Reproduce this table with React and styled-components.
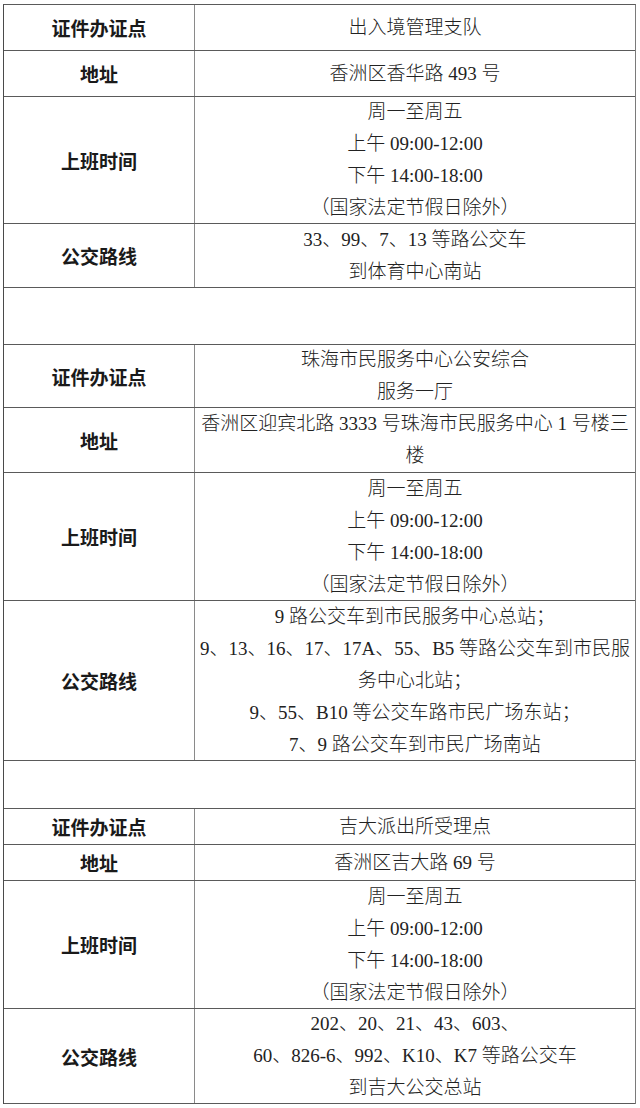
import React from "react";
import styled, { createGlobalStyle } from "styled-components";

const GlobalStyle = createGlobalStyle`
  html, body {
    margin: 0;
    padding: 0;
    background: #ffffff;
  }
`;

const Page = styled.div`
  padding: 4px 0 0 3px;
`;

const Table = styled.div`
  width: 633px;
  border-top: 1px solid #5a5a5a;
  border-left: 1px solid #4a4a4a;
  border-right: 1px solid #7a7a7a;
  box-sizing: border-box;
`;

const Row = styled.div`
  display: flex;
  height: ${(p) => p.$h}px;
  border-bottom: 1px solid #5a5a5a;
  box-sizing: border-box;
`;

const LabelCell = styled.div`
  width: 191px;
  flex-shrink: 0;
  display: flex;
  align-items: center;
  justify-content: center;
  border-right: 1px solid #8a8a8a;
  box-sizing: border-box;
  font-family: "Noto Sans CJK SC", "Noto Sans", sans-serif;
  font-weight: 700;
  font-size: 19px;
  color: #1a1a1a;
`;

const ValueCell = styled.div`
  flex: 1;
  display: flex;
  flex-direction: column;
  justify-content: center;
  align-items: center;
  padding: 0 2px;
  font-family: "Liberation Serif", "Noto Sans CJK SC", serif;
  font-weight: 300;
  font-size: 19px;
  line-height: 32px;
  color: #222222;
`;

const Line = styled.div`
  white-space: nowrap;
  text-align: center;
`;

const hours = ["周一至周五", "上午 09:00-12:00", "下午 14:00-18:00", "（国家法定节假日除外）"];

const groups = [
  {
    rows: [
      { label: "证件办证点", lines: ["出入境管理支队"], h: 46 },
      { label: "地址", lines: ["香洲区香华路 493 号"], h: 46 },
      { label: "上班时间", lines: hours, h: 127 },
      { label: "公交路线", lines: ["33、99、7、13 等路公交车", "到体育中心南站"], h: 64 },
    ],
    gap: 57,
  },
  {
    rows: [
      { label: "证件办证点", lines: ["珠海市民服务中心公安综合", "服务一厅"], h: 63 },
      { label: "地址", lines: ["香洲区迎宾北路 3333 号珠海市民服务中心 1 号楼三", "楼"], h: 65 },
      { label: "上班时间", lines: hours, h: 128 },
      {
        label: "公交路线",
        lines: [
          "9 路公交车到市民服务中心总站；",
          "9、13、16、17、17A、55、B5 等路公交车到市民服",
          "务中心北站；",
          "9、55、B10 等公交车路市民广场东站；",
          "7、9 路公交车到市民广场南站",
        ],
        h: 160,
      },
    ],
    gap: 48,
  },
  {
    rows: [
      { label: "证件办证点", lines: ["吉大派出所受理点"], h: 36 },
      { label: "地址", lines: ["香洲区吉大路 69 号"], h: 36 },
      { label: "上班时间", lines: hours, h: 128 },
      {
        label: "公交路线",
        lines: ["202、20、21、43、603、", "60、826-6、992、K10、K7 等路公交车", "到吉大公交总站"],
        h: 95,
      },
    ],
  },
];

const App = () => {
  return (
    <Page>
      <GlobalStyle />
      <Table>
        {groups.map((g, gi) => (
          <React.Fragment key={gi}>
            {g.rows.map((r, ri) => (
              <Row key={ri} $h={r.h}>
                <LabelCell>{r.label}</LabelCell>
                <ValueCell>
                  {r.lines.map((l, li) => (
                    <Line key={li}>{l}</Line>
                  ))}
                </ValueCell>
              </Row>
            ))}
            {g.gap && <Row $h={g.gap} />}
          </React.Fragment>
        ))}
      </Table>
    </Page>
  );
};

export default App;
